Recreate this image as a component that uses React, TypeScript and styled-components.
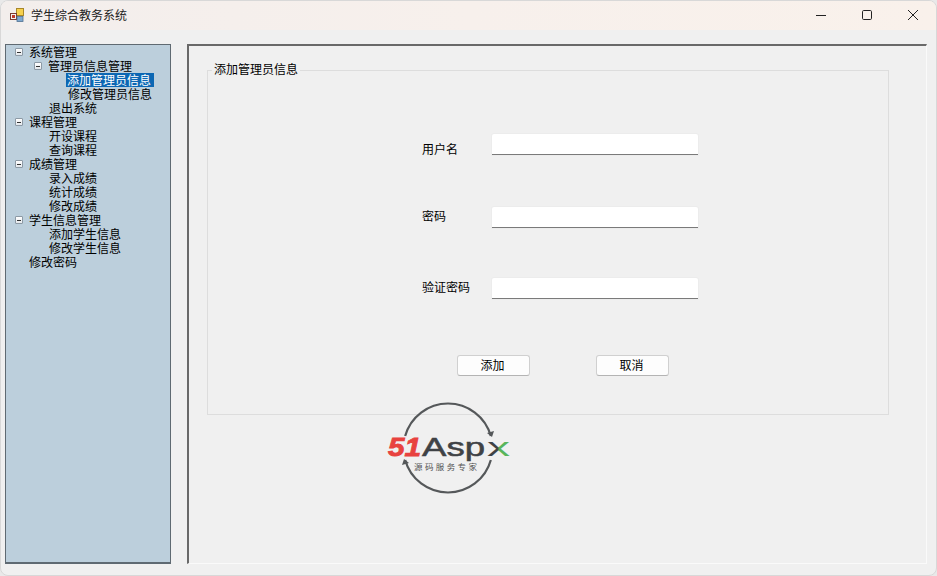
import styled, { createGlobalStyle } from "styled-components";

const GlobalStyle = createGlobalStyle`
  html, body {
    margin: 0;
    padding: 0;
    background: #e9e9e9;
    overflow: hidden;
  }
  * {
    box-sizing: border-box;
  }
`;

const FONT = `"Noto Sans CJK SC", "Liberation Sans", sans-serif`;

const Window = styled.div`
  width: 937px;
  height: 576px;
  display: flex;
  flex-direction: column;
  background: #f0f0f0;
  border: 1px solid #d8d8d8;
  border-radius: 8px;
  overflow: hidden;
  font-family: ${FONT};
  font-size: 12px;
  color: #000;
`;

const TitleBar = styled.header`
  height: 29px;
  flex: none;
  display: flex;
  align-items: center;
  padding: 0 0 2px 9px;
  background: linear-gradient(90deg, #f3eeec 0%, #f7f0ec 50%, #f9f1eb 100%);
`;

const AppIcon = styled.svg`
  width: 14px;
  height: 14px;
  flex: none;
`;

const Title = styled.span`
  margin-left: 7px;
  color: #222;
  line-height: 14px;
`;

const Controls = styled.div`
  margin-left: auto;
  display: flex;
  height: 100%;
`;

const ControlButton = styled.div`
  width: 46px;
  display: flex;
  align-items: center;
  justify-content: center;
  svg {
    width: 12px;
    height: 12px;
    display: block;
  }
`;

const Body = styled.main`
  flex: 1;
  display: flex;
  gap: 16px;
  padding: 14px 9px 11px 4px;
  min-height: 0;
`;

const Sidebar = styled.nav`
  width: 166px;
  flex: none;
  background: #bccfdc;
  border: 1px solid #5f6a72;
  border-bottom-width: 2px;
`;

const TreeRow = styled.div<{ $indent: number }>`
  height: 14px;
  display: flex;
  align-items: center;
  padding-left: ${p => p.$indent}px;
  white-space: nowrap;
`;

const Toggle = styled.span`
  width: 8px;
  height: 8px;
  flex: none;
  margin-right: 4px;
  border: 1px solid #8d9aa5;
  border-radius: 1px;
  background: linear-gradient(#ffffff, #e4e8ec);
  display: flex;
  align-items: center;
  justify-content: center;
  &::before {
    content: "";
    width: 4px;
    height: 1px;
    background: #333;
  }
`;

const NodeText = styled.span<{ $selected?: boolean }>`
  display: block;
  padding: ${p => (p.$selected ? "0 3px 0 1px" : "0 2px")};
  height: 14px;
  line-height: 14px;
  color: ${p => (p.$selected ? "#fff" : "#000")};
  background: ${p => (p.$selected ? "#0c67b3" : "transparent")};
`;

const Panel = styled.section`
  position: relative;
  flex: 1;
  border-top: 2px solid #696969;
  border-left: 2px solid #696969;
  border-right: 1px solid #fafafa;
  border-bottom: 1px solid #fafafa;
  padding: 17px 37px 0 18px;
`;

const GroupBox = styled.fieldset`
  margin: 0;
  padding: 0;
  height: 352px;
  border: 1px solid #dddddd;
  min-width: 0;
`;

const GroupTitle = styled.legend`
  margin-left: 4px;
  padding: 0 2px;
  line-height: 14px;
  position: relative;
  top: -1px;
`;

const FormArea = styled.div`
  padding-left: 214px;
`;

const FormRow = styled.div<{ $top: number; $labelTop: number }>`
  display: flex;
  margin-top: ${p => p.$top}px;
  height: 21px;
  label {
    width: 70px;
    flex: none;
    padding-top: ${p => p.$labelTop}px;
    line-height: 14px;
  }
`;

const TextBox = styled.input`
  width: 206px;
  height: 21px;
  padding: 0 4px;
  background: #fff;
  border: none;
  border-bottom: 1px solid #7a7a7a;
  border-radius: 2px 2px 0 0;
  box-shadow: 0 0 0 1px #ececec;
  outline: none;
`;

const ButtonRow = styled.div`
  display: flex;
  gap: 66px;
  margin-top: 56px;
  margin-left: 35px;
`;

const PushButton = styled.button`
  width: 73px;
  height: 21px;
  padding: 0 2px 2px 0;
  font: inherit;
  color: #000;
  line-height: 17px;
  background: #fdfdfd;
  border: 1px solid #d0d0d0;
  border-bottom-color: #b4b4b4;
  border-radius: 3px;
`;

const Logo = styled.svg`
  position: absolute;
  left: 186px;
  top: 349px;
  width: 150px;
  height: 105px;
`;

type Node = { text: string; indent: number; toggle?: boolean; selected?: boolean };

const nodes: Node[] = [
  { text: "系统管理", indent: 9, toggle: true },
  { text: "管理员信息管理", indent: 28, toggle: true },
  { text: "添加管理员信息", indent: 60, selected: true },
  { text: "修改管理员信息", indent: 60 },
  { text: "退出系统", indent: 41 },
  { text: "课程管理", indent: 9, toggle: true },
  { text: "开设课程", indent: 41 },
  { text: "查询课程", indent: 41 },
  { text: "成绩管理", indent: 9, toggle: true },
  { text: "录入成绩", indent: 41 },
  { text: "统计成绩", indent: 41 },
  { text: "修改成绩", indent: 41 },
  { text: "学生信息管理", indent: 9, toggle: true },
  { text: "添加学生信息", indent: 41 },
  { text: "修改学生信息", indent: 41 },
  { text: "修改密码", indent: 21 },
];

function App() {
  return (
    <>
      <GlobalStyle />
      <Window>
        <TitleBar>
          <AppIcon viewBox="0 0 14 14">
            <rect x="6.5" y="0.5" width="7" height="7" fill="#f6d04d" stroke="#a8872a" />
            <rect x="0.5" y="5.5" width="6" height="6" fill="#f2f2f2" stroke="#7a3b30" />
            <rect x="2" y="7" width="3" height="3" fill="#c0392b" />
            <rect x="7" y="8.5" width="6" height="5" fill="#7fa8cf" stroke="#51708f" strokeWidth="0.8" />
          </AppIcon>
          <Title>学生综合教务系统</Title>
          <Controls>
            <ControlButton>
              <svg viewBox="0 0 12 12"><path d="M1 6.5h10" stroke="#222" strokeWidth="1" /></svg>
            </ControlButton>
            <ControlButton>
              <svg viewBox="0 0 12 12"><rect x="1.5" y="1.5" width="9" height="9" rx="1.2" fill="none" stroke="#222" /></svg>
            </ControlButton>
            <ControlButton>
              <svg viewBox="0 0 12 12"><path d="M1 1l10 10M11 1L1 11" stroke="#222" strokeWidth="1" /></svg>
            </ControlButton>
          </Controls>
        </TitleBar>
        <Body>
          <Sidebar>
            {nodes.map(node => (
              <TreeRow key={node.text} $indent={node.indent}>
                {node.toggle && <Toggle />}
                <NodeText $selected={node.selected}>{node.text}</NodeText>
              </TreeRow>
            ))}
          </Sidebar>
          <Panel>
            <GroupBox>
              <GroupTitle>添加管理员信息</GroupTitle>
              <FormArea>
                <FormRow $top={57} $labelTop={8}>
                  <label>用户名</label>
                  <TextBox />
                </FormRow>
                <FormRow $top={52} $labelTop={2}>
                  <label>密码</label>
                  <TextBox />
                </FormRow>
                <FormRow $top={50} $labelTop={2}>
                  <label>验证密码</label>
                  <TextBox />
                </FormRow>
                <ButtonRow>
                  <PushButton>添加</PushButton>
                  <PushButton>取消</PushButton>
                </ButtonRow>
              </FormArea>
            </GroupBox>
            <Logo viewBox="0 0 150 105">
              <defs>
                <linearGradient id="xFill" x1="0" x2="1" y1="0" y2="0">
                  <stop offset="0.45" stopColor="#3f4245" />
                  <stop offset="0.55" stopColor="#58b55c" />
                </linearGradient>
              </defs>
              <path d="M30.15 41A44.5 44.5 0 0 1 115.85 41" fill="none" stroke="#55585a" strokeWidth="2.2" />
              <path d="M115.85 65A44.5 44.5 0 0 1 30.15 65" fill="none" stroke="#55585a" strokeWidth="2.2" />
              <path d="M112 38l5 4 2-6z" fill="#55585a" />
              <path d="M34 68l-5-4-2 6z" fill="#55585a" />
              <text x="13" y="61" fontFamily="Liberation Sans, sans-serif" fontWeight="700" fontStyle="italic" fontSize="25" fill="#e8423f" stroke="#e8423f" strokeWidth="0.8" textLength="33" lengthAdjust="spacingAndGlyphs">51</text>
              <text x="47" y="61" fontFamily="Liberation Sans, sans-serif" fontSize="26" fill="#3f4245" stroke="#3f4245" strokeWidth="0.5" textLength="63" lengthAdjust="spacingAndGlyphs">Asp</text>
              <text x="112" y="61" fontFamily="Liberation Sans, sans-serif" fontSize="26" fill="url(#xFill)" textLength="23" lengthAdjust="spacingAndGlyphs">x</text>
              <text x="39" y="75" fontFamily={FONT} fontSize="8.5" fill="#555" textLength="63">源码服务专家</text>
            </Logo>
          </Panel>
        </Body>
      </Window>
    </>
  );
}

export default App;
